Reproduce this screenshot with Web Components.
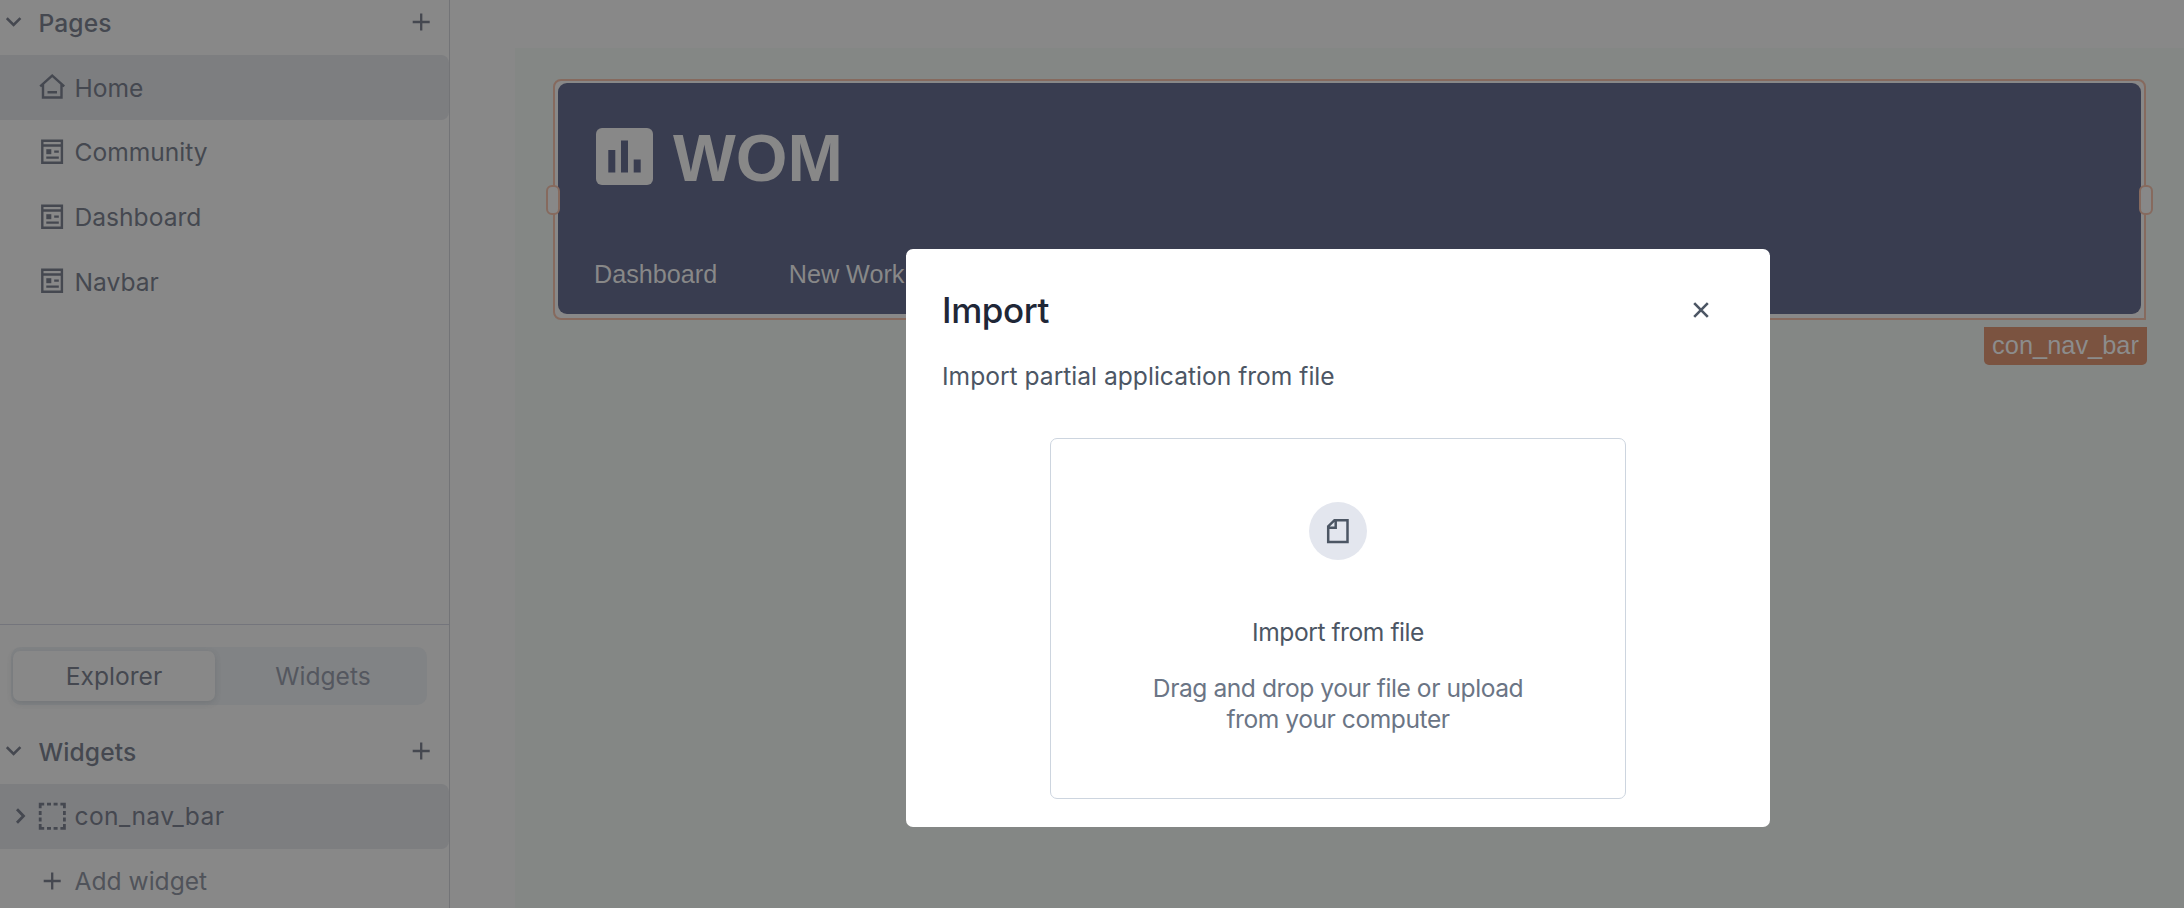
<!DOCTYPE html>
<html lang="en">
<head>
<meta charset="utf-8">
<title>Editor</title>
<style>
html,body{margin:0;height:100%;overflow:hidden;background:#888888}
body{font-family:Inter,"Liberation Sans",sans-serif;font-size:24.6px;color:#454850}
</style>
</head>
<body>
<editor-shell>
  <side-panel slot="side">
    <section-head slot="pages">Pages</section-head>
    <tree-row slot="pages" icon="home" selected>Home</tree-row>
    <tree-row slot="pages" icon="page">Community</tree-row>
    <tree-row slot="pages" icon="page">Dashboard</tree-row>
    <tree-row slot="pages" icon="page">Navbar</tree-row>
    <segment-tabs slot="tree"></segment-tabs>
    <section-head slot="tree">Widgets</section-head>
    <tree-row slot="tree" icon="container" expandable selected>con_nav_bar</tree-row>
    <tree-row slot="tree" icon="plus" muted>Add widget</tree-row>
  </side-panel>
  <app-canvas>
    <nav-widget name="con_nav_bar"></nav-widget>
  </app-canvas>
  <import-dialog slot="dialog" heading="Import">
    Import partial application from file
    <file-drop slot="body"></file-drop>
  </import-dialog>
</editor-shell>
<script>
const ICONS = {
  home: '<svg width="28" height="28" viewBox="0 0 28 28" fill="none" stroke="currentColor" stroke-width="2.400"><path d="M2.200 13.300 14.200 2.500 26.200 13.300M5 11.500V24.500h18.500V11.500M9.500 19.300h9.500"/></svg>',
  page: '<svg width="28" height="28" viewBox="0 0 28 28" fill="none" stroke="currentColor" stroke-width="2.400"><path d="M4.300 2.800h19.600v22H4.300zM4.300 7.500h19.600M16.200 13.600h4.600M8.300 19.600h12.500"/><path d="M8.300 11.200h5v5h-5z" fill="currentColor" stroke="none"/></svg>',
  container: '<svg width="28" height="28" viewBox="0 0 28 28" fill="none" stroke="currentColor" stroke-width="2.800"><path d="M2.200 6.200V2.200H6.200M22.400 2.200h4V6.200M26.400 22v4.400H22.400M6.200 26.400H2.200V22M9 2.200h4M15.600 2.200h4M9 26.400h4M15.600 26.400h4M2.200 9v4M2.200 15.600v4M26.400 9v4M26.400 15.600v4"/></svg>',
  plus: '<svg width="28" height="28" viewBox="0 0 28 28" fill="none" stroke="currentColor" stroke-width="2.300"><path d="M14.200 5.500v17M5.700 14h17"/></svg>',
  down: '<svg width="16" height="12" viewBox="0 0 16 12" fill="none" stroke="currentColor" stroke-width="2.600"><path d="M.8 2.200 7.600 9l6.800-6.800"/></svg>',
  right: '<svg width="12" height="16" viewBox="0 0 12 16" fill="none" stroke="currentColor" stroke-width="2.800"><path d="M3 1.200 9.500 8 3 14.800"/></svg>',
  close: '<svg width="16" height="16" viewBox="0 0 16 16" fill="none" stroke="currentColor" stroke-width="2.600"><path d="M1.200 1.200l13.600 13.600M14.800 1.200 1.200 14.800"/></svg>',
  file: '<svg width="24" height="26" viewBox="0 0 24 26" fill="none" stroke="currentColor" stroke-width="2.500"><path d="M2.200 8.300 8.500 2.200H21.500V24H2.200zM2.200 9.800h7.500V2.200"/></svg>',
  chart: '<svg width="57" height="57" viewBox="0 0 57 57"><rect width="57" height="57" rx="6" fill="#888888"/><path d="M12.300 22h7v22.500h-7zM25 12.500h7v32h-7zM37.700 31.500h7v13h-7z" fill="#393d50"/></svg>'
};
const define = (name, html) => customElements.define(name, class extends HTMLElement {
  constructor() {
    super();
    this.attachShadow({ mode: 'open' }).innerHTML =
      '<style>*{box-sizing:border-box}svg{display:block;flex:none}</style>' +
      (typeof html === 'function' ? html(this) : html);
  }
});

define('editor-shell', `<style>
:host{display:grid;grid-template-columns:450px 1fr;width:2184px;height:908px;position:relative;overflow:hidden}
.dialog{position:absolute;left:906px;top:249px}
</style><slot name="side"></slot><slot></slot><div class="dialog"><slot name="dialog"></slot></div>`);

define('side-panel', `<style>
:host{display:flex;flex-direction:column;box-sizing:border-box;border-right:1px solid #737477;height:908px;overflow:hidden}
.pages{border-bottom:1px solid #74757c;flex:none;margin-top:-10px;height:635px}
.tree{flex:none;padding-top:22px}
</style><div class="pages"><slot name="pages"></slot></div><div class="tree"><slot name="tree"></slot></div>`);

define('section-head', `<style>
:host{display:flex;align-items:center;height:65px;padding:0 14px 0 6px;font-weight:500;letter-spacing:.1px;box-sizing:border-box}
span{flex:1;padding-left:16.500px;position:relative;top:.5px}
svg{position:relative;top:-1px}
</style>${ICONS.down}<span><slot></slot></span>${ICONS.plus}`);

define('tree-row', el => `<style>
:host{display:flex;align-items:center;height:64.650px;box-sizing:border-box;padding-left:14px}
:host([selected]){background:#7d7e80;border-radius:0 8px 8px 0}
:host([expandable]){letter-spacing:.38px}
:host([muted]) span{color:#50535a}
:host([slot="pages"]) span{padding-top:1px}
.caret{width:24px;flex:none}
span{padding-left:8.500px}
</style><div class="caret">${el.hasAttribute('expandable') ? ICONS.right : ''}</div>${ICONS[el.getAttribute('icon')]}<span><slot></slot></span>`);

define('segment-tabs', `<style>
:host{display:flex;width:416px;height:58px;margin:0 0 14px 11px;padding:4px 2px;background:#818385;border-radius:10px;box-sizing:border-box}
div{flex:1;display:flex;align-items:center;justify-content:center;color:#54575f;padding-left:6px}
.on{flex:0 0 202px;padding:0;background:#888888;color:#454850;border-radius:7px;box-shadow:0 2px 6px rgba(60,64,72,.2)}
</style><div class="on">Explorer</div><div>Widgets</div>`);

define('app-canvas', `<style>
:host{display:block;margin:48px 0 0 65px;background:#848785;padding:31px 38px 0 38px;height:860px;box-sizing:border-box}
</style><slot></slot>`);

define('nav-widget', el => `<style>
:host{display:block;position:relative;height:241px;border:2px solid #866a5e;border-radius:8px 8px 0 8px;padding:2px 3px;box-sizing:border-box;background:#888888;font-family:"Liberation Sans",Arial,sans-serif}
.bar{height:231px;background:#393d50;border-radius:9px;padding:45px 38px 0;color:#888888;overflow:hidden}
.brand{display:flex;align-items:center;gap:20px;font-weight:700;font-size:66.500px;line-height:57px}
.brand span{position:relative;top:2px}
.links{display:flex;gap:71.500px;margin:73px 0 0 -2px;font-size:25.200px;line-height:32px}
.grip{position:absolute;width:14px;height:30px;border:2px solid #866a5e;border-radius:6px;background:#888888;top:104px}
.l{left:-9px}.r{right:-9px}
.tag{position:absolute;right:-3px;top:246px;height:38px;width:163px;background:#7b5340;border-radius:0 0 5px 5px;color:#8c8c8c;font-size:25.400px;line-height:37px;text-align:center}
</style><div class="bar"><div class="brand">${ICONS.chart}<span>WOM</span></div><div class="links"><span>Dashboard</span><span>New Work</span></div></div>
<div class="grip l"></div><div class="grip r"></div><div class="tag">${el.getAttribute('name')}</div>`);

define('import-dialog', el => `<style>
:host{display:block;width:864px;height:578px;background:#fff;border-radius:7px;padding:36px 36px 0;color:#4c5664;box-sizing:border-box}
header{display:flex;justify-content:space-between;align-items:center;height:50px;padding-right:25px}
h1{margin:0;font-size:35px;font-weight:500;color:#1f2737;letter-spacing:-.4px}
p{margin:23px 0 0;line-height:36px}
</style><header><h1>${el.getAttribute('heading')}</h1>${ICONS.close}</header><p><slot></slot></p><slot name="body"></slot>`);

define('file-drop', `<style>
:host{display:flex;flex-direction:column;align-items:center;box-sizing:border-box;width:576px;height:361px;margin:44px 0 0 108px;border:1px solid #cdd5df;border-radius:7px;padding-top:63px;text-align:center;letter-spacing:-.45px}
.ico{width:58px;height:58px;border-radius:50%;background:#e3e6ee;display:flex;align-items:center;justify-content:center}
b{font-weight:400;line-height:32px;margin-top:56px}
p{margin:25px 0 0;line-height:31px;color:#6b7585}
</style><div class="ico">${ICONS.file}</div><b>Import from file</b><p>Drag and drop your file or upload<br>from your computer</p>`);
</script>
</body>
</html>
